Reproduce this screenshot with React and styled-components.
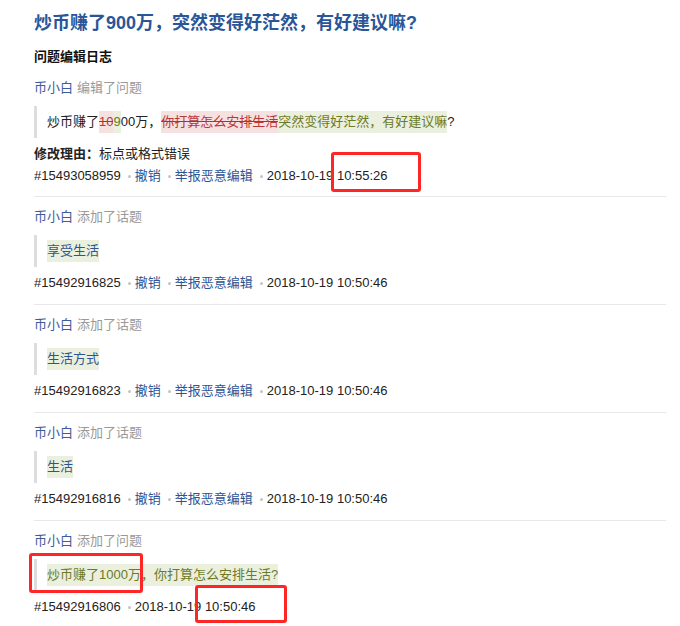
import { styled, createGlobalStyle } from "styled-components";

const GlobalStyle = createGlobalStyle`
  html, body {
    margin: 0;
    padding: 0;
    background: #fff;
  }
  body {
    font-family: "Liberation Sans", Arial, "Noto Sans CJK SC", sans-serif;
    font-size: 13px;
    color: #222;
  }
`;

const Page = styled.div`
  position: relative;
  width: 680px;
  height: 626px;
  overflow: hidden;
  padding: 11px 14px 0 34px;
  box-sizing: border-box;
`;

const Title = styled.h1`
  margin: 0;
  font-size: 18px;
  line-height: 24px;
  font-weight: bold;
  color: #2a5598;
`;

const SubTitle = styled.h2`
  margin: 12px 0 0;
  font-size: 13px;
  line-height: 20px;
  font-weight: bold;
  color: #111;
`;

const LogList = styled.div`
  margin-top: 11px;
  display: flex;
  flex-direction: column;
`;

const Entry = styled.div`
  display: flex;
  flex-direction: column;
  padding: ${(p) => (p.$first ? "0 0 10px" : "10px 0 11px")};
  border-top: ${(p) => (p.$first ? "none" : "1px solid #e8e8e8")};
`;

const Head = styled.div`
  line-height: 20px;
  color: #999;
`;

const Name = styled.span`
  color: #3c5d9c;
  margin-right: 4px;
`;

const Quote = styled.div`
  margin-top: 8px;
  padding: 5px 10px;
  border-left: 3px solid #ddd;
  line-height: 22px;
  height: 22px;
  white-space: nowrap;
  color: #222;
`;

const Del = styled.span`
  display: inline-block;
  background: #f6e1e1;
  color: #b8373a;
  text-decoration: line-through;
  text-decoration-color: #c62828;
`;

const Ins = styled.span`
  display: inline-block;
  background: #eaf0dd;
  color: ${(p) => (p.$topic ? "#2d5596" : "#6e7a26")};
`;

const Reason = styled.div`
  margin-top: 6px;
  line-height: 20px;
  color: #222;

  & b {
    font-weight: bold;
  }
`;

const Meta = styled.div`
  margin-top: ${(p) => (p.$tight ? "2px" : "6px")};
  line-height: 20px;
  display: flex;
  align-items: center;
  color: #222;
  white-space: nowrap;
`;

const Dot = styled.span`
  display: inline-block;
  width: 3px;
  height: 3px;
  border-radius: 50%;
  background: #c4c4c4;
  margin: 0 4px 0 7px;
`;

const Link = styled.a`
  color: #2d5596;
  text-decoration: none;
`;

const Mark = styled.div`
  position: absolute;
  border: 3px solid #ff2626;
  border-radius: 3px;
  box-sizing: border-box;
  pointer-events: none;
`;

const topics = [
  { id: "15492916825", text: "享受生活" },
  { id: "15492916823", text: "生活方式" },
  { id: "15492916816", text: "生活" },
];

function MetaLine({ id, time, actions = true, tight }) {
  return (
    <Meta $tight={tight}>
      <span>#{id}</span>
      {actions && (
        <>
          <Dot />
          <Link href="#">撤销</Link>
          <Dot />
          <Link href="#">举报恶意编辑</Link>
        </>
      )}
      <Dot />
      <span>{time}</span>
    </Meta>
  );
}

export default function App() {
  return (
    <>
      <GlobalStyle />
      <Page>
        <Title>炒币赚了900万，突然变得好茫然，有好建议嘛?</Title>
        <SubTitle>问题编辑日志</SubTitle>
        <LogList>
          <Entry $first>
            <Head>
              <Name>币小白</Name>编辑了问题
            </Head>
            <Quote>
              炒币赚了<Del>10</Del>
              <Ins>9</Ins>00万，<Del>你打算怎么安排生活</Del>
              <Ins>突然变得好茫然，有好建议嘛</Ins>?
            </Quote>
            <Reason>
              <b>修改理由：</b>标点或格式错误
            </Reason>
            <MetaLine id="15493058959" time="2018-10-19 10:55:26" tight />
          </Entry>
          {topics.map((t) => (
            <Entry key={t.id}>
              <Head>
                <Name>币小白</Name>添加了话题
              </Head>
              <Quote>
                <Ins $topic>{t.text}</Ins>
              </Quote>
              <MetaLine id={t.id} time="2018-10-19 10:50:46" />
            </Entry>
          ))}
          <Entry>
            <Head>
              <Name>币小白</Name>添加了问题
            </Head>
            <Quote>
              <Ins>炒币赚了1000万，你打算怎么安排生活?</Ins>
            </Quote>
            <MetaLine id="15492916806" time="2018-10-19 10:50:46" actions={false} />
          </Entry>
        </LogList>
        <Mark style={{ left: 331, top: 152, width: 90, height: 40 }} />
        <Mark style={{ left: 29, top: 553, width: 114, height: 40 }} />
        <Mark style={{ left: 195, top: 585, width: 92, height: 38 }} />
      </Page>
    </>
  );
}
